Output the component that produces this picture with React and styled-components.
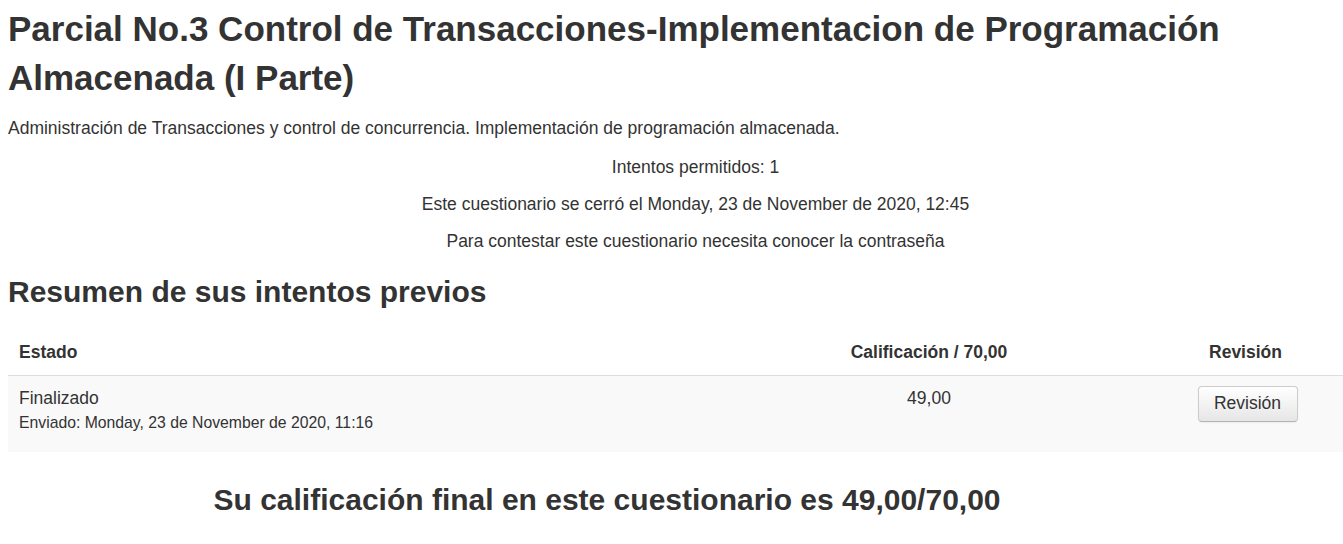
import styled, { createGlobalStyle } from "styled-components";

const GlobalStyle = createGlobalStyle`
  html, body {
    margin: 0;
    padding: 0;
    overflow: hidden;
    background: #ffffff;
  }
  body {
    font-family: "Liberation Sans", Arial, sans-serif;
    color: #333333;
  }
`;

const attempts = [
  {
    state: "Finalizado",
    sent: "Enviado: Monday, 23 de November de 2020, 11:16",
    grade: "49,00",
  },
];

const App = () => {
  return (
    <>
      <GlobalStyle />
      <Page>
        <Title>
          Parcial No.3 Control de Transacciones-Implementacion de Programación
          Almacenada (I Parte)
        </Title>
        <Intro>
          Administración de Transacciones y control de concurrencia.
          Implementación de programación almacenada.
        </Intro>
        <QuizInfo>
          <InfoLine>Intentos permitidos: 1</InfoLine>
          <InfoLine>
            Este cuestionario se cerró el Monday, 23 de November de 2020, 12:45
          </InfoLine>
          <InfoLine>
            Para contestar este cuestionario necesita conocer la contraseña
          </InfoLine>
        </QuizInfo>
        <SectionTitle>Resumen de sus intentos previos</SectionTitle>
        <Table>
          <thead>
            <tr>
              <HeadCell $width={702} $align="left">
                Estado
              </HeadCell>
              <HeadCell $width={438}>Calificación / 70,00</HeadCell>
              <HeadCell $width={195}>Revisión</HeadCell>
            </tr>
          </thead>
          <tbody>
            {attempts.map((a) => (
              <Row key={a.sent}>
                <Cell $align="left">
                  <StateText>{a.state}</StateText>
                  <SentText>{a.sent}</SentText>
                </Cell>
                <Cell>{a.grade}</Cell>
                <Cell>
                  <ReviewButton>Revisión</ReviewButton>
                </Cell>
              </Row>
            ))}
          </tbody>
        </Table>
        <FinalGrade>
          Su calificación final en este cuestionario es 49,00/70,00
        </FinalGrade>
      </Page>
    </>
  );
};

export default App;

const Page = styled.div`
  padding: 4px 8px 0 8px;
  width: 1375px;
`;
const Title = styled.h1`
  margin: 0;
  width: 1260px;
  font-size: 35px;
  line-height: 49px;
  font-weight: 700;
  color: #333333;
`;
const Intro = styled.p`
  margin: 14px 0 0 0;
  font-size: 17.5px;
  line-height: 24px;
`;
const QuizInfo = styled.div`
  margin-top: 15px;
  display: flex;
  flex-direction: column;
  gap: 13px;
`;
const InfoLine = styled.p`
  margin: 0;
  text-align: center;
  font-size: 17.5px;
  line-height: 24px;
`;
const SectionTitle = styled.h2`
  margin: 21px 0 0 0;
  font-size: 30px;
  line-height: 35px;
  font-weight: 700;
`;
const Table = styled.table`
  margin-top: 20px;
  width: 1335px;
  border-collapse: collapse;
  table-layout: fixed;
  font-size: 17.5px;
`;
const HeadCell = styled.th`
  width: ${(p) => p.$width}px;
  height: 46px;
  padding: 1px 11px 0 11px;
  box-sizing: border-box;
  text-align: ${(p) => p.$align || "center"};
  font-weight: 700;
  font-size: 17.5px;
  border-bottom: 1px solid #dddddd;
`;
const Row = styled.tr`
  background: #f9f9f9;
`;
const Cell = styled.td`
  height: 77px;
  padding: 10px 11px 0 11px;
  box-sizing: border-box;
  vertical-align: top;
  text-align: ${(p) => p.$align || "center"};
  line-height: 24px;
`;
const StateText = styled.div`
  font-size: 17.5px;
  line-height: 24px;
`;
const SentText = styled.div`
  font-size: 15.75px;
  line-height: 26px;
`;
const ReviewButton = styled.button`
  width: 100px;
  height: 36px;
  margin-left: 4px;
  font-family: "Liberation Sans", Arial, sans-serif;
  font-size: 17.5px;
  color: #333333;
  background: linear-gradient(to bottom, #ffffff, #e6e6e6);
  border: 1px solid #cccccc;
  border-bottom-color: #b3b3b3;
  border-radius: 4px;
  box-shadow: inset 0 1px 0 rgba(255, 255, 255, 0.2), 0 1px 2px rgba(0, 0, 0, 0.05);
`;
const FinalGrade = styled.h3`
  margin: 33px 0 0 0;
  width: 1198px;
  text-align: center;
  font-size: 30px;
  line-height: 30px;
  font-weight: 700;
`;
